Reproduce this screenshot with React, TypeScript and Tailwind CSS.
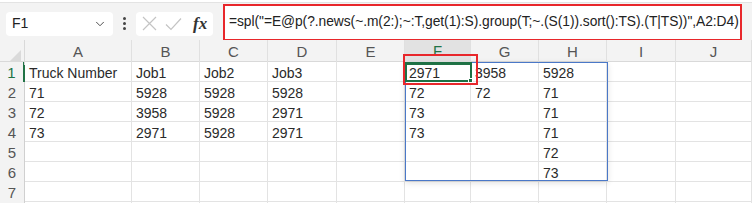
import { ChevronDown } from 'lucide-react';

const cols = ['A', 'B', 'C', 'D', 'E', 'F', 'G', 'H', 'I', 'J'];

const data: string[][] = [
  ['Truck Number', 'Job1', 'Job2', 'Job3', '', '2971', '3958', '5928', '', ''],
  ['71', '5928', '5928', '5928', '', '72', '72', '71', '', ''],
  ['72', '3958', '5928', '2971', '', '73', '', '71', '', ''],
  ['73', '2971', '5928', '2971', '', '73', '', '71', '', ''],
  ['', '', '', '', '', '', '', '72', '', ''],
  ['', '', '', '', '', '', '', '73', '', ''],
  ['', '', '', '', '', '', '', '', '', ''],
];

const formula = '=spl("=E@p(?.news(~.m(2:);~:T,get(1):S).group(T;~.(S(1)).sort():TS).(T|TS))",A2:D4)';

const gridCols = 'grid grid-cols-[25px_107px_68px_68px_69px_68px_66px_68px_68px_69px_1fr]';

export default function App() {
  return (
    <div className="w-[752px] h-[203px] overflow-hidden bg-white font-['Liberation_Sans',sans-serif] text-[#333]">
      {/* formula bar */}
      <div className="h-[40px] bg-[#f3f3f3] flex items-center pl-[6px] pr-[10px] relative">
        <div className="absolute top-0 left-0 right-0 h-[3px] bg-white border-b border-[#e3e3e3]" />
        <div className="shrink-0 w-[107px] h-[24px] mt-[7px] bg-white rounded-[4px] flex items-center justify-between pl-[6px] pr-[6px]">
          <span className="text-[14px] text-[#222]">F1</span>
          <ChevronDown className="w-[14px] h-[14px] text-[#444]" strokeWidth={1.6} />
        </div>
        <div className="shrink-0 w-[23px] mt-[7px] flex flex-col items-center gap-[2px]">
          <span className="w-[3px] h-[3px] rounded-full bg-[#444]" />
          <span className="w-[3px] h-[3px] rounded-full bg-[#444]" />
          <span className="w-[3px] h-[3px] rounded-full bg-[#444]" />
        </div>
        <div className="shrink-0 w-[77px] h-[24px] mt-[7px] bg-white rounded-[4px] flex items-center pl-[6px] gap-[8px]">
          <svg width="15" height="15" viewBox="0 0 15 15" fill="none" stroke="#c4c4c4" strokeWidth="1.2">
            <path d="M1 1L14 14M14 1L1 14" />
          </svg>
          <svg width="17" height="14" viewBox="0 0 17 14" fill="none" stroke="#c4c4c4" strokeWidth="1.2">
            <path d="M1 7.5L6 12.5L16 1.5" />
          </svg>
          <span className="font-['Liberation_Serif',serif] italic font-bold text-[17px] text-[#333] ml-[3px] leading-none">fx</span>
        </div>
        <div className="ml-[10px] flex-1 min-w-0 h-[37px] mt-[4px] border-2 border-[#e8272b] bg-white flex items-center pl-[4px] text-[13.8px] tracking-[-0.05px] text-[#222] whitespace-nowrap overflow-hidden">
          {formula}
        </div>
      </div>

      {/* grid */}
      <div className="relative">
        <div className={`${gridCols} h-[22px] bg-[#f3f3f3] border-b border-[#d9d9d9]`}>
          <div className="border-r border-[#d9d9d9] relative">
            <div className="absolute right-[3px] bottom-[3px] w-0 h-0 border-l-[12px] border-l-transparent border-b-[12px] border-b-[#dadada]" />
          </div>
          {cols.map((c) => (
            <div
              key={c}
              className={`border-r border-[#e0e0e0] flex items-center justify-center text-[15px] ${
                c === 'F' ? 'bg-[#e2e2e2] text-[#217346] border-b-2 border-b-[#217346]' : 'text-[#555]'
              }`}
            >
              {c}
            </div>
          ))}
        </div>
        {data.map((row, r) => (
          <div key={r} className={`${gridCols} h-[20px] border-b border-[#e3e3e3]`}>
            <div
              className={`bg-[#f3f3f3] flex items-center justify-center text-[15px] border-r ${
                r === 0 ? 'text-[#217346] border-r-2 border-r-[#217346]' : 'text-[#555] border-r-[#d0d0d0]'
              }`}
            >
              {r + 1}
            </div>
            {row.map((v, i) => (
              <div key={i} className="border-r border-[#e3e3e3] flex items-center pl-[4px] text-[14px] text-[#2a2a2a] whitespace-nowrap overflow-visible">
                {v}
              </div>
            ))}
          </div>
        ))}

        {/* spill range */}
        <div className="absolute left-[405px] top-[22px] w-[203px] h-[119px] border border-[#4a78c8] shadow-[0_2px_6px_rgba(0,0,0,0.12)] pointer-events-none" />
        {/* active cell */}
        <div className="absolute left-[405px] top-[22px] w-[67px] h-[20px] border-2 border-[#1e7145]">
          <div className="absolute right-[-3px] bottom-[-3px] w-[5px] h-[5px] bg-[#1e7145] border border-white" />
        </div>
        {/* annotation */}
        <div className="absolute left-[403px] top-[14px] w-[75px] h-[31px] border-2 border-[#e8272b]" />
      </div>
    </div>
  );
}
